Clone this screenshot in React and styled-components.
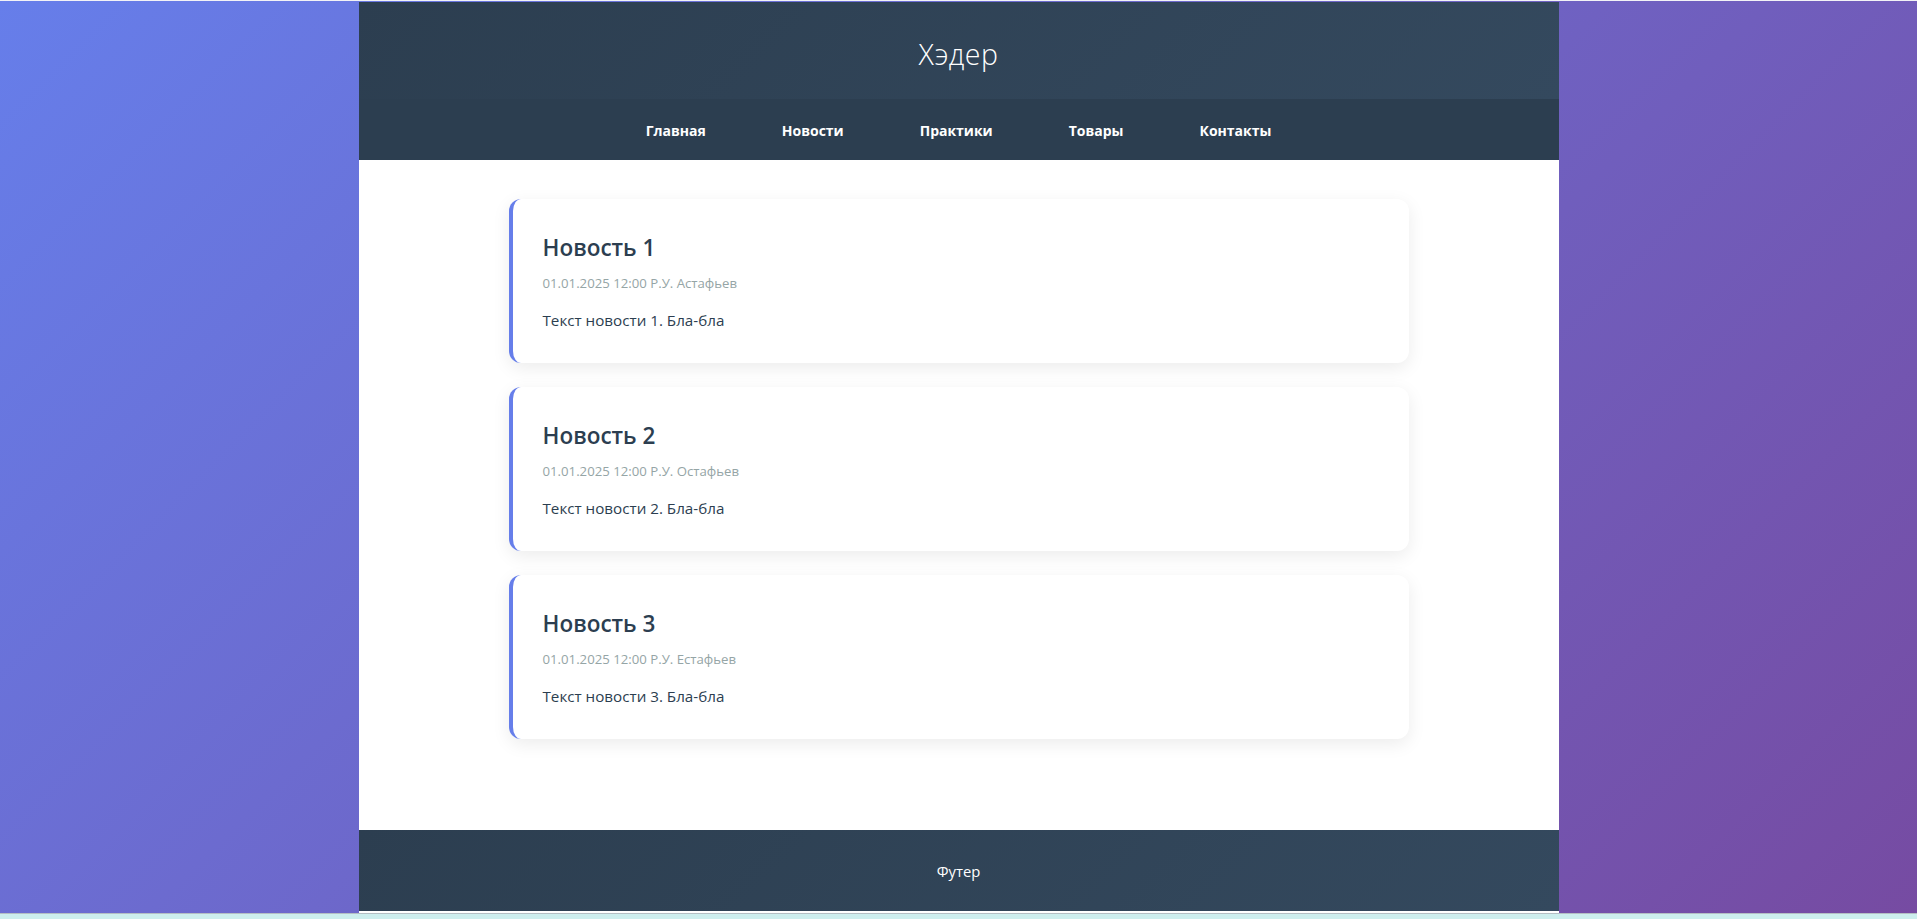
import React from "react";
import styled, { createGlobalStyle } from "styled-components";

const GlobalStyle = createGlobalStyle`
  html, body { margin: 0; padding: 0; }
  body {
    background: #cdeeee;
    font-family: "Open Sans", "Noto Sans", "Liberation Sans", sans-serif;
  }
  * { box-sizing: border-box; }
`;

const Page = styled.div`
  background: linear-gradient(135deg, #667eea 0%, #764ba2 100%);
  border-top: 1px solid #f2f2f6;
  border-bottom: 1px solid #b4bfc4;
  padding-top: 1px;
`;

const Container = styled.div`
  width: 1200px;
  margin: 0 auto;
  background: #ffffff;
  padding-bottom: 2px;
  display: flex;
  flex-direction: column;
`;

const Header = styled.header`
  height: 97px;
  background: linear-gradient(135deg, #2c3e50 0%, #34495e 100%);
  display: flex;
  align-items: center;
  justify-content: center;
`;

const Title = styled.h1`
  margin: 0;
  color: #ffffff;
  font-size: 28.5px;
  font-weight: 300;
  letter-spacing: 0.5px;
  padding-top: 6px;
`;

const Nav = styled.nav`
  height: 61px;
  background: #2c3e50;
  display: flex;
  align-items: center;
  justify-content: center;
  gap: 44px;
  padding-top: 2px;
`;

const NavLink = styled.a`
  color: #ffffff;
  text-decoration: none;
  font-weight: 700;
  font-size: 14px;
  padding: 8px 16px;
  border-radius: 4px;
  cursor: pointer;
`;

const Main = styled.main`
  height: 670px;
  padding: 39px 20px 0;
  display: flex;
  flex-direction: column;
  align-items: center;
  gap: 24px;
`;

const Card = styled.article`
  width: 900px;
  height: 164px;
  background: #ffffff;
  border-left: 4px solid #667eea;
  border-radius: 12px;
  box-shadow: 0 5px 18px rgba(0, 0, 0, 0.08);
  padding: 35px 30px 30px;
`;

const CardTitle = styled.h2`
  margin: 0;
  font-size: 22.5px;
  line-height: 28px;
  font-weight: 600;
  color: #2c3e50;
`;

const Meta = styled.div`
  margin-top: 11px;
  font-size: 13.2px;
  line-height: 20px;
  color: #95a5a6;
`;

const Text = styled.p`
  margin: 15px 0 0;
  font-size: 15.2px;
  line-height: 24px;
  color: #2c3e50;
`;

const Footer = styled.footer`
  height: 81px;
  background: linear-gradient(135deg, #2c3e50 0%, #34495e 100%);
  color: #ffffff;
  display: flex;
  align-items: center;
  justify-content: center;
  font-size: 14.8px;
`;

const links = ["Главная", "Новости", "Практики", "Товары", "Контакты"];

const news = [
  { title: "Новость 1", author: "Р.У. Астафьев", text: "Текст новости 1. Бла-бла" },
  { title: "Новость 2", author: "Р.У. Остафьев", text: "Текст новости 2. Бла-бла" },
  { title: "Новость 3", author: "Р.У. Естафьев", text: "Текст новости 3. Бла-бла" },
];

export default function App() {
  return (
    <>
      <GlobalStyle />
      <Page>
        <Container>
          <Header>
            <Title>Хэдер</Title>
          </Header>
          <Nav>
            {links.map((l) => (
              <NavLink key={l}>{l}</NavLink>
            ))}
          </Nav>
          <Main>
            {news.map((n) => (
              <Card key={n.title}>
                <CardTitle>{n.title}</CardTitle>
                <Meta>01.01.2025 12:00 {n.author}</Meta>
                <Text>{n.text}</Text>
              </Card>
            ))}
          </Main>
          <Footer>Футер</Footer>
        </Container>
      </Page>
    </>
  );
}
